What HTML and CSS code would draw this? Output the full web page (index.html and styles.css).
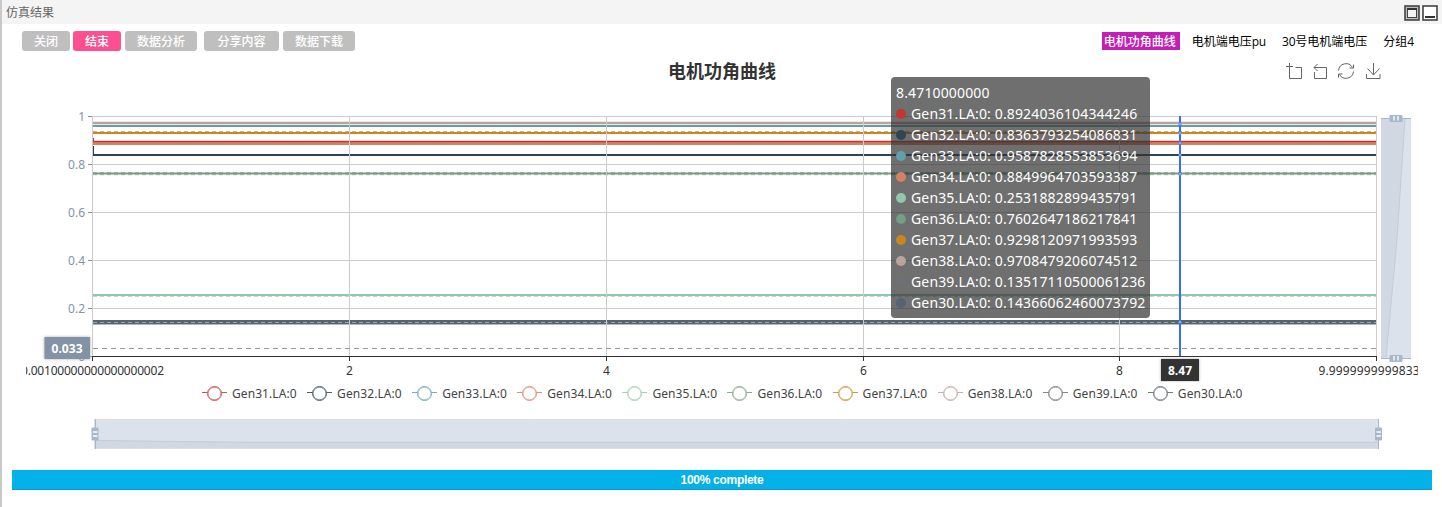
FILE: index.html
```html
<!DOCTYPE html>
<html lang="zh-CN">
<head>
<meta charset="utf-8">
<title>仿真结果</title>
<link rel="stylesheet" href="styles.css">
</head>
<body>
<div class="window">
  <header class="titlebar">
    <span>仿真结果</span>
    <svg class="window-controls" width="34" height="16" viewBox="0 0 34 16">
      <rect x="1" y="1" width="14" height="14" fill="#bbb" stroke="#444" stroke-width="1.600"/>
      <rect x="3.500" y="4" width="9" height="8.500" fill="#f4f4f4" stroke="#444"/>
      <path d="M3 4h10" stroke="#333" stroke-width="2"/>
      <rect x="19" y="1" width="14" height="14" fill="#fff" stroke="#444" stroke-width="1.600"/>
      <path d="M21 12h10" stroke="#333" stroke-width="2"/>
    </svg>
  </header>
  <nav class="toolbar">
    <button class="btn">关闭</button>
    <button class="btn btn-active">结束</button>
    <button class="btn btn-wide">数据分析</button>
    <button class="btn btn-share">分享内容</button>
    <button class="btn btn-wide">数据下载</button>
    <div class="tabs">
      <span class="tab tab-active">电机功角曲线</span>
      <span class="tab">电机端电压<span class="latin">pu</span></span>
      <span class="tab"><span class="latin">30</span>号电机端电压</span>
      <span class="tab">分组<span class="latin">4</span></span>
    </div>
  </nav>
  <main class="chart">
    <div class="chart-head">
      <h1>电机功角曲线</h1>
      <svg class="toolbox" width="98" height="18" viewBox="0 0 98 18" fill="none" stroke="#666">
        <path d="M5.500 0v15.500h12v-11h-6M2 3.500h7"/>
        <path d="M30 4.500h12.500v11h-12V9M33.500 1L30 4.500 33.500 8"/>
        <path d="M54.500 7.500a7.500 7.500 0 0 1 14-3M69.500 8.500a7.500 7.500 0 0 1-14 3M69.500 1.500v3.500h-4M54.500 14.500V11h4"/>
        <path d="M89.500 0v12M83.500 5.500l6 6.500 6-6.500M82.500 11v4.500h13.500V11"/>
      </svg>
    </div>
    <svg class="plot" width="1392" height="292" viewBox="26 90 1392 292">
      <g stroke="#ccc">
        <path d="M93 116.500h1284M93 164.500h1284M93 212.500h1284M93 260.500h1284M93 308.500h1284"/>
      </g>
      <g fill="none" stroke-width="2">
        <path d="M93 155H1376" stroke="#2f4554"/>
        <path d="M93.500 146v10" stroke="#2f4554" stroke-width="1"/>
        <path d="M93 126H1376" stroke="#61a0a8"/>
        <path d="M93 143.500H1376" stroke="#d48265" stroke-width="3"/>
        <path d="M93 141.500H1376" stroke="#c23531" stroke-width="1.300"/>
        <path d="M93.500 138v4" stroke="#c23531" stroke-width="1"/>
        <path d="M93 295H1376" stroke="#91c7ae"/>
        <path d="M93 173.500H1376" stroke="#749f83"/>
        <path d="M93 133H1376" stroke="#ca8622"/>
        <path d="M93 123H1376" stroke="#bda29a" stroke-width="2.500"/>
        <path d="M93 323.500H1376" stroke="#6e7074"/>
        <path d="M93 322H1376" stroke="#546570" stroke-width="4"/>
      </g>
      <g fill="none" stroke-width="1" stroke-dasharray="4 3" opacity=".65">
        <path d="M93 131.500H1376" stroke="#ca8622"/>
        <path d="M93 174.700H1376M93 172.500H1376" stroke="#749f83"/>
        <path d="M93 296.500H1376" stroke="#91c7ae"/>
        <path d="M93 322.500H1376" stroke="#c2c9cd"/>
      </g>
      <path d="M92.500 116v241M349.500 116v241M606.500 116v241M863.500 116v241M1119.500 116v241M1376.500 116v241" stroke="#ccc"/>
      <path d="M93 348.500H1376" stroke="#999" stroke-dasharray="5 4"/>
      <path d="M88 116.500h4M88 164.500h4M88 212.500h4M88 260.500h4M88 308.500h4M88 356.500h4" stroke="#8392a5"/>
      <path d="M92 356.500h1285M92.500 356v5M349.500 356v5M606.500 356v5M863.500 356v5M1119.500 356v5M1376.500 356v5" stroke="#333"/>
      <path d="M1180 116v240" stroke="#376df4" stroke-width="2"/>
      <g fill="#fff" fill-opacity=".45" stroke="#376df4" stroke-opacity=".5">
        <circle cx="1180" cy="124" r="1.500"/><circle cx="1180" cy="133" r="1.500"/><circle cx="1180" cy="143" r="1.500"/>
        <circle cx="1180" cy="155" r="1.500"/><circle cx="1180" cy="174" r="1.500"/><circle cx="1180" cy="322" r="1.500"/>
      </g>
      <g class="axis axis-y" text-anchor="end">
        <text x="85" y="121">1</text>
        <text x="85" y="169" textLength="17">0.8</text>
        <text x="85" y="217" textLength="17">0.6</text>
        <text x="85" y="265" textLength="17">0.4</text>
        <text x="85" y="313" textLength="17">0.2</text>
        <text x="85" y="361">0</text>
      </g>
      <g class="axis axis-x" text-anchor="middle">
        <text x="92.500" y="375" textLength="143">0.00100000000000000002</text>
        <text x="349.500" y="375">2</text>
        <text x="606.500" y="375">4</text>
        <text x="863.500" y="375">6</text>
        <text x="1119.500" y="375">8</text>
        <text x="1318.500" y="375" text-anchor="start" textLength="101">9.9999999999833</text>
      </g>
      <g class="vertical-zoom">
        <rect x="1381" y="118" width="30" height="241" fill="#dbe2ec"/>
        <path d="M1381 119h24l-8 120-11 119h-5z" fill="#d1d8e2"/>
        <path d="M1405 119l-8 120-11 119" stroke="#c4ccd9" fill="none"/>
        <path d="M1381 118.500h30M1381 358.500h30" stroke="#a7b7cc"/>
        <rect x="1389.500" y="115" width="13" height="7" rx="1" fill="#a7b7cc"/>
        <rect x="1389.500" y="355" width="13" height="7" rx="1" fill="#a7b7cc"/>
        <path d="M1394 116v4.500M1398 116v4.500M1394 356v4.500M1398 356v4.500" stroke="#fff" stroke-width="1.300"/>
      </g>
      <g class="pointer-label" text-anchor="middle">
        <rect x="44.500" y="337" width="45.500" height="22" fill="#8392a5"/>
        <text x="67" y="353" textLength="31">0.033</text>
        <rect x="1161" y="359" width="38" height="22" fill="#333"/>
        <text x="1180" y="375" textLength="24">8.47</text>
      </g>
    </svg>
    <div class="legend">
      <span class="key red"><i></i><b>Gen31.LA:0</b></span>
      <span class="key navy"><i></i><b>Gen32.LA:0</b></span>
      <span class="key teal"><i></i><b>Gen33.LA:0</b></span>
      <span class="key coral"><i></i><b>Gen34.LA:0</b></span>
      <span class="key mint"><i></i><b>Gen35.LA:0</b></span>
      <span class="key green"><i></i><b>Gen36.LA:0</b></span>
      <span class="key amber"><i></i><b>Gen37.LA:0</b></span>
      <span class="key rose"><i></i><b>Gen38.LA:0</b></span>
      <span class="key gray"><i></i><b>Gen39.LA:0</b></span>
      <span class="key slate"><i></i><b>Gen30.LA:0</b></span>
    </div>
    <svg class="zoom" width="1392" height="33" viewBox="26 417 1392 33">
      <rect x="94.500" y="419.500" width="1284" height="29" fill="#dbe2ec" stroke="#ddd"/>
      <path d="M95 440.500L250 442.300H1050L1378 442.300V448H95z" fill="#d1d8e2"/>
      <path d="M95 440.500L250 442.300H1378" stroke="#c4ccd9" fill="none"/>
      <path d="M95.500 419v30M1378.500 419v30" stroke="#a7b7cc"/>
      <rect x="91.500" y="427.500" width="7" height="13" rx="1" fill="#a7b7cc"/>
      <rect x="1375" y="427.500" width="7" height="13" rx="1" fill="#a7b7cc"/>
      <path d="M93 432h4.500M93 436h4.500M1376.500 432h4.500M1376.500 436h4.500" stroke="#fff" stroke-width="1.300"/>
    </svg>
    <div class="tooltip">
      <div>8.4710000000</div>
      <div class="red"><i></i>Gen31.LA:0: 0.8924036104344246</div>
      <div class="navy"><i></i>Gen32.LA:0: 0.8363793254086831</div>
      <div class="teal"><i></i>Gen33.LA:0: 0.9587828553853694</div>
      <div class="coral"><i></i>Gen34.LA:0: 0.8849964703593387</div>
      <div class="mint"><i></i>Gen35.LA:0: 0.2531882899435791</div>
      <div class="green"><i></i>Gen36.LA:0: 0.7602647186217841</div>
      <div class="amber"><i></i>Gen37.LA:0: 0.9298120971993593</div>
      <div class="rose"><i></i>Gen38.LA:0: 0.9708479206074512</div>
      <div class="gray"><i></i>Gen39.LA:0: 0.13517110500061236</div>
      <div class="slate"><i></i>Gen30.LA:0: 0.14366062460073792</div>
    </div>
  </main>
  <div class="progress"><span>100% complete</span></div>
</div>
</body>
</html>
```

FILE: styles.css
```css
* { box-sizing: border-box; }
body { margin: 0; background: #fff; font: 12px "Noto Sans", "Noto Sans CJK SC", sans-serif; overflow: hidden; }
.window { height: 507px; border-left: 2px solid #c8c8c8; }
.titlebar { height: 24px; padding: 0 4px; background: #f4f4f4; color: #666; display: flex; justify-content: space-between; align-items: center; font-family: "Noto Sans CJK SC", sans-serif; }
.titlebar span { margin-top: -1px; }
.window-controls { margin-top: 2px; }
.toolbar { height: 32px; padding: 7px 26px 0 20px; display: flex; align-items: flex-start; }
.btn { width: 48px; height: 20px; margin: 0 3px 0 0; padding: 0 0 1px; border: 0; border-radius: 3px; background: #bfbfbf; color: #fff; font: 500 12px/19px "Noto Sans CJK SC", sans-serif; }
.btn-active { background: #ff4f93; margin-right: 4px; }
.btn-wide { width: 72px; margin-right: 7px; }
.btn-share { width: 75px; margin-right: 4px; }
.tabs { margin: 1px 0 0 auto; display: flex; gap: 12px; }
.tab { height: 18px; line-height: 17px; padding: 0 2px; color: #000; font-family: "Noto Sans CJK SC", sans-serif; white-space: nowrap; }
.latin { font-family: "Open Sans", sans-serif; letter-spacing: -.2px; }
.tab-active { width: 78px; background: #c21fb5; color: #fff; font-weight: 500; margin-right: -2px; }
.chart { position: relative; height: 414px; padding-left: 24px; }
.chart-head { height: 34px; width: 1392px; display: grid; grid-template-columns: 1fr auto 1fr; align-items: start; }
.chart-head h1 { grid-column: 2; margin: 0; padding-top: 1px; color: #333; font: bold 18px/26px "Noto Sans CJK SC", sans-serif; }
.toolbox { grid-column: 3; justify-self: end; margin: 7px 36px 0 0; }
.plot, .zoom { display: block; }
.axis { font: 12px "Noto Sans", sans-serif; }
.axis-y { fill: #8392a5; }
.axis-x { fill: #333; }
.pointer-label { font: bold 12px "Open Sans", sans-serif; fill: #fff; }
.pointer-label rect { filter: drop-shadow(0 0 1.5px #aaa); }
.legend { height: 35px; padding: 2px 0 0 176px; display: flex; color: #444; }
.key { width: 105.1px; height: 18px; display: flex; align-items: center; gap: 5px; }
.key b { padding-top: 1px; font: 12px/18px "Noto Sans", sans-serif; white-space: nowrap; letter-spacing: .08px; }
.key i { width: 25px; height: 13px; margin-top: -2px; display: flex; justify-content: center; opacity: .85; background: linear-gradient(var(--c), var(--c)) center / 100% 1px no-repeat; }
.key i::before { content: ""; width: 13px; height: 13px; border: 1.5px solid var(--c); border-radius: 50%; background: #fff; box-shadow: inset 0 0 0 .4px var(--c); }
.tooltip { position: absolute; left: 889px; top: 21px; width: 259px; height: 241px; padding: 5px; border-radius: 4px; background: rgba(50, 50, 50, .7); color: #fff; font: 14px/21px "Noto Sans", sans-serif; letter-spacing: .15px; white-space: nowrap; }
.tooltip i { display: inline-block; width: 10px; height: 10px; margin-right: 5px; border-radius: 50%; background: var(--c); }
.red { --c: #c23531; }
.navy { --c: #2f4554; }
.teal { --c: #61a0a8; }
.coral { --c: #d48265; }
.mint { --c: #91c7ae; }
.green { --c: #749f83; }
.amber { --c: #ca8622; }
.rose { --c: #bda29a; }
.gray { --c: #6e7074; }
.slate { --c: #546570; }
.progress { height: 20px; margin: 0 10px; background: #03b0e8; border-bottom: 1px solid #079bd0; color: #fff; text-align: center; font: bold 12px/20px "Liberation Sans", Arial, sans-serif; letter-spacing: -.3px; }
```
